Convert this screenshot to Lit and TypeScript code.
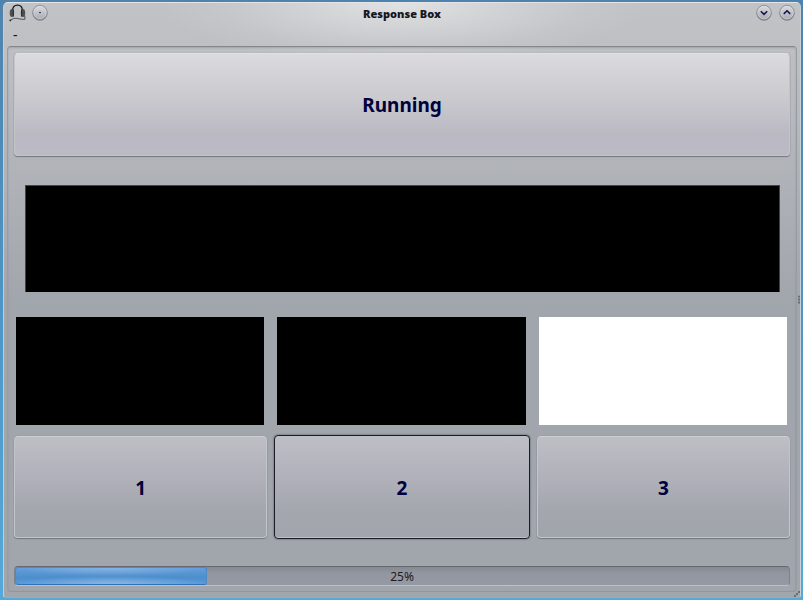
import { LitElement, html, css, svg } from "lit";
import { customElement, property, state } from "lit/decorators.js";
import { classMap } from "lit/directives/class-map.js";

@customElement("title-bar")
class TitleBar extends LitElement {
  @property() heading = "";

  static styles = css`
    :host {
      display: grid;
      grid-template-columns: 1fr auto 1fr;
      height: 20px;
      margin-bottom: 2px;
      padding: 0 2px;
      align-items: center;
    }
    .group { display: flex; align-items: center; gap: 6px; }
    .end { justify-content: flex-end; gap: 7px; }
    h1 {
      margin: 2px 0 0;
      font: 900 11px/16px "Noto Sans", sans-serif;
      color: #17171f;
    }
    button { display: block; width: 16px; height: 16px; padding: 0; border: 0; background: none; }
    svg { display: block; width: 16px; height: 16px; overflow: visible; }
    .logo { width: 17px; height: 18px; }
  `;

  private round(label: string, glyph: unknown) {
    return html`<button aria-label=${label}>
      <svg viewBox="0 0 16 16">
        <defs>
          <linearGradient id="face" x2="0" y2="1">
            <stop offset="0" stop-color="#dcdce0" />
            <stop offset="1" stop-color="#a9a9b4" />
          </linearGradient>
        </defs>
        <circle cx="8" cy="8.3" r="7.5" fill="#70757c" opacity=".8" />
        <circle cx="8" cy="7.5" r="7.2" fill="url(#face)" stroke="#84878e" stroke-width=".9" />
        <circle cx="8" cy="7.5" r="6.3" fill="none" stroke="#e2e2e6" stroke-width=".7" opacity=".6" />
        ${glyph}
      </svg>
    </button>`;
  }

  render() {
    return html`
      <div class="group">
        <svg class="logo" viewBox="0 0 17 18" fill="none">
          <path d="M3.4 7C3.8 -0.8 13.2 -0.8 13.6 7" stroke="#1d1d1d" stroke-width="1.3" />
          <ellipse cx="2.9" cy="9" rx="2.2" ry="4" fill="#504f4f" />
          <ellipse cx="14" cy="9" rx="2.2" ry="4" fill="#504f4f" />
          <path d="M4.3 5.4V12.6M12.6 5.4V12.6" stroke="#292929" />
          <path d="M1 16.5L3 15.2C8 12.8 10 16 16 15.2L15.7 11.5" stroke="#4e5053" />
          <circle cx="1.3" cy="16.4" r=".9" fill="#292929" />
        </svg>
        ${this.round("On all desktops", svg`<circle cx="8" cy="7.5" r=".8" fill="#15154a" />`)}
      </div>
      <h1>${this.heading}</h1>
      <div class="group end">
        ${this.round("Minimize", svg`<path d="M4.8 6.3L8 9.4L11.2 6.3" fill="none" stroke="#15154a" stroke-width="1.6" />`)}
        ${this.round("Maximize", svg`<path d="M4.8 8.9L8 5.8L11.2 8.9" fill="none" stroke="#15154a" stroke-width="1.6" />`)}
      </div>
    `;
  }
}

@customElement("app-root")
class AppRoot extends LitElement {
  @state() private progress = 25;
  @state() private lit = 3;
  @state() private selected = 2;

  static styles = css`
    :host {
      display: block;
      font-family: "Noto Sans", sans-serif;
      color: #00003c;
    }
    * { box-sizing: border-box; }
    .desktop {
      min-height: 100vh;
      padding: 2px 2px 2px 3px;
      display: flex;
      background: linear-gradient(#4f83ad, #4c93c2 45%, #55a9d8);
    }
    .window {
      position: relative;
      flex: 1;
      display: flex;
      flex-direction: column;
      padding: 0 3px 5px;
      border: 1px solid;
      border-color: #e3e5e7 #cbd0d4 #a1a9b1 #c3cdd4;
      border-radius: 5px 5px 3px 3px;
      background:
        radial-gradient(240px 64px at 50% 0, rgba(230, 231, 232, 0.85), rgba(226, 227, 229, 0.5) 40%, rgba(216, 217, 220, 0.2) 75%, rgba(208, 209, 212, 0)),
        linear-gradient(#c2c3c6, #bcbec2 60px, #a1a5ac 300px, #a1a5ac);
    }
    .menu {
      height: 21px;
      padding-left: 6px;
      font-size: 14px;
      line-height: 20px;
      color: #111118;
    }
    main {
      flex: 1;
      display: flex;
      flex-direction: column;
      padding: 5px;
      border: 1px solid;
      border-color: #85878b #979ba2 #92969d #999ca1;
      border-radius: 4px;
      box-shadow: inset 0 1px 2px rgba(80, 84, 92, 0.25);
    }
    .key {
      display: block;
      flex: 1 0 103px;
      min-width: 0;
      margin: 1px;
      padding: 0;
      border: 1px solid;
      border-color: #cfcfd4 #c4c5ca #c4c5ca #c4c5ca;
      border-radius: 4px;
      background: linear-gradient(#bebec5, #b4b4bd 30%, #a3a6ad 75%, #a0a4ab);
      box-shadow: 0 1px 1px #72767d, 0 0 1px #777b82;
      font: bold 19px/24px "Noto Sans", sans-serif;
      color: #00003c;
    }
    .keys .key { padding-top: 1px; }
    .status {
      border-top-color: #e2e2e6;
      background: linear-gradient(#dbdade, #c9c9ce 45%, #bab9c3 80%, #bcbbc5);
    }
    .keys .selected {
      margin: 0;
      border-color: #1b1c28;
      box-shadow: inset 0 -1px #c0c1c5, 0 0 2px #464b54;
    }
    .stimulus {
      flex: 1 0 107px;
      margin: 28px 11px 25px 12px;
      border: 1px solid #e00000;
      border-bottom: 0;
      background: #000;
    }
    .lamps, .keys { display: grid; grid-template-columns: repeat(3, 1fr); gap: 6px; }
    .lamps { flex: 1 0 108px; }
    .lamp { margin: 0 4px 0 3px; background: #000; }
    .on { background: #fff; }
    .keys { flex: 1 0 104px; margin: 10px 0 27px; }
    .track {
      position: relative;
      height: 20px;
      margin: 0 1px;
      border: 1px solid;
      border-color: #666a70 #7d8188 #bfc0c4 #7d8188;
      border-radius: 4px;
      background: linear-gradient(#858990, #9296a0 35%, #949aa3);
      overflow: hidden;
    }
    .fill {
      height: 100%;
      border: 1px solid #498bcb;
      border-bottom-color: #2f72b6;
      border-radius: 3px;
      background:
        radial-gradient(50% 50% at 50% 0, rgba(150, 188, 232, 0.7), rgba(150, 188, 232, 0)),
        radial-gradient(50% 50% at 50% 100%, rgba(150, 188, 232, 0.8), rgba(150, 188, 232, 0)),
        linear-gradient(#639ddb, #4c8fcb 60%, #5b9ada);
    }
    .percent {
      position: absolute;
      inset: 0;
      font-size: 12px;
      line-height: 20px;
      text-align: center;
      color: #1c1c24;
    }
    .grip { position: absolute; fill: #686d75; }
    .side { right: -1px; top: 50%; width: 3px; height: 9px; transform: translateY(-50%); }
    .corner { right: 0; bottom: 0; width: 6px; height: 6px; }
  `;

  render() {
    const keys = [1, 2, 3];
    return html`
      <div class="desktop">
        <div class="window">
          <title-bar heading="Response Box"></title-bar>
          <div class="menu">-</div>
          <main>
            <button class="key status">Running</button>
            <div class="stimulus"></div>
            <div class="lamps">
              ${keys.map((k) => html`<div class=${classMap({ lamp: true, on: k === this.lit })}></div>`)}
            </div>
            <div class="keys">
              ${keys.map(
                (k) => html`<button
                  class=${classMap({ key: true, selected: k === this.selected })}
                  @click=${() => (this.selected = k)}
                >${k}</button>`
              )}
            </div>
            <div class="track" role="progressbar" aria-label="Progress" aria-valuenow=${this.progress}>
              <div class="fill" style="width:calc(${this.progress}% - 2px)"></div>
              <div class="percent">${this.progress}%</div>
            </div>
          </main>
          <svg class="grip side" viewBox="0 0 3 9">
            <path d="M0 0h2v2H0zM0 3h2v2H0zM0 6h2v2H0z" />
          </svg>
          <svg class="grip corner" viewBox="0 0 6 6">
            <path d="M4 0h2v2H4zM2 2h2v2H2zM0 4h2v2H0z" />
          </svg>
        </div>
      </div>
    `;
  }
}
